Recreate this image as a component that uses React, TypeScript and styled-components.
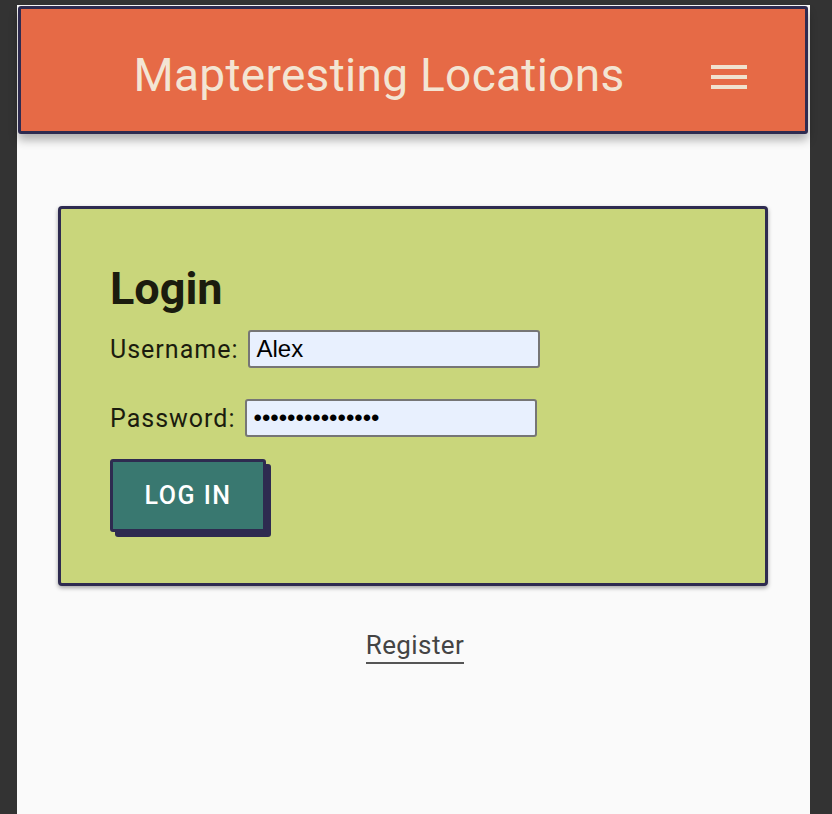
import React, { useState } from 'react'
import styled, { createGlobalStyle } from 'styled-components'

const GlobalStyle = createGlobalStyle`
  html, body {
    margin: 0;
    padding: 0;
    background: #333333;
    font-family: Roboto, 'Noto Sans', sans-serif;
  }
`

const Page = styled.div`
  margin: 5px 22px 0 17px;
  min-height: 809px;
  background: #fafafa;
  padding: 1px 2px 0 1px;
  box-sizing: border-box;
`

const Header = styled.header`
  height: 128px;
  box-sizing: border-box;
  background: #e66a46;
  border: 3px solid #2e2b50;
  border-radius: 3px;
  box-shadow: 0 6px 10px rgba(0, 0, 0, 0.3);
  display: flex;
  align-items: center;
  justify-content: center;
  position: relative;
`

const Title = styled.h1`
  margin: 10px 0 0 -68px;
  font-size: 46px;
  font-weight: 400;
  letter-spacing: 0.3px;
  color: #f3e5d3;
`

const MenuButton = styled.button`
  position: absolute;
  right: 58px;
  top: 56px;
  width: 36px;
  height: 24px;
  padding: 0;
  border: none;
  background: none;
  display: flex;
  flex-direction: column;
  justify-content: space-between;
  cursor: pointer;
`

const MenuLine = styled.span`
  display: block;
  height: 4px;
  background: #f0e2cf;
`

const Main = styled.main`
  padding: 72px 40px 0 40px;
  display: flex;
  flex-direction: column;
  align-items: stretch;
`

const Card = styled.section`
  background: #c9d67b;
  border: 3px solid #2e2b50;
  border-radius: 4px;
  box-shadow: 0 2px 4px rgba(0, 0, 0, 0.35);
  padding: 54px 49px 51px 49px;
`

const Heading = styled.h2`
  margin: 0 0 15px 0;
  font-size: 45px;
  font-weight: 700;
  color: #1b1c0e;
  line-height: 52px;
`

const Field = styled.div`
  display: flex;
  align-items: center;
  margin-bottom: 31px;
`

const Label = styled.label`
  font-size: 25px;
  letter-spacing: 1px;
  color: #1b1c0e;
  margin-right: 10px;
`

const Input = styled.input`
  width: 292px;
  height: 38px;
  box-sizing: border-box;
  background: #e8f0fe;
  border: 2px solid #767676;
  border-radius: 3px;
  padding: 0 6px;
  font-family: 'Liberation Sans', Arial, sans-serif;
  font-size: 24px;
  color: #000;
  outline: none;
`

const Button = styled.button`
  margin-top: -9px;
  width: 156px;
  height: 73px;
  background: #397870;
  border: 3px solid #2e2b50;
  border-radius: 3px;
  box-shadow: 5px 5px 0 #2e2b50;
  color: #ffffff;
  font-family: Roboto, sans-serif;
  font-size: 25px;
  font-weight: 500;
  letter-spacing: 1.5px;
  cursor: pointer;
`

const Footer = styled.div`
  display: flex;
  justify-content: center;
  margin-top: 44px;
  margin-left: 4px;
`

const RegisterLink = styled.a`
  font-size: 26px;
  letter-spacing: 0.4px;
  color: #444444;
  text-decoration: none;
  padding-bottom: 2px;
  border-bottom: 2px solid #555555;
  cursor: pointer;
`

export default function App() {
  const [username, setUsername] = useState('Alex')
  const [password, setPassword] = useState('•••••••••••••••')

  return (
    <>
      <GlobalStyle />
      <Page>
        <Header>
          <Title>Mapteresting Locations</Title>
          <MenuButton aria-label="menu">
            <MenuLine />
            <MenuLine />
            <MenuLine />
          </MenuButton>
        </Header>
        <Main>
          <Card>
            <Heading>Login</Heading>
            <Field>
              <Label htmlFor="username">Username:</Label>
              <Input
                id="username"
                value={username}
                onChange={(e) => setUsername(e.target.value)}
              />
            </Field>
            <Field>
              <Label htmlFor="password">Password:</Label>
              <Input
                id="password"
                type="password"
                value={password}
                onChange={(e) => setPassword(e.target.value)}
              />
            </Field>
            <Button>LOG IN</Button>
          </Card>
          <Footer>
            <RegisterLink>Register</RegisterLink>
          </Footer>
        </Main>
      </Page>
    </>
  )
}
